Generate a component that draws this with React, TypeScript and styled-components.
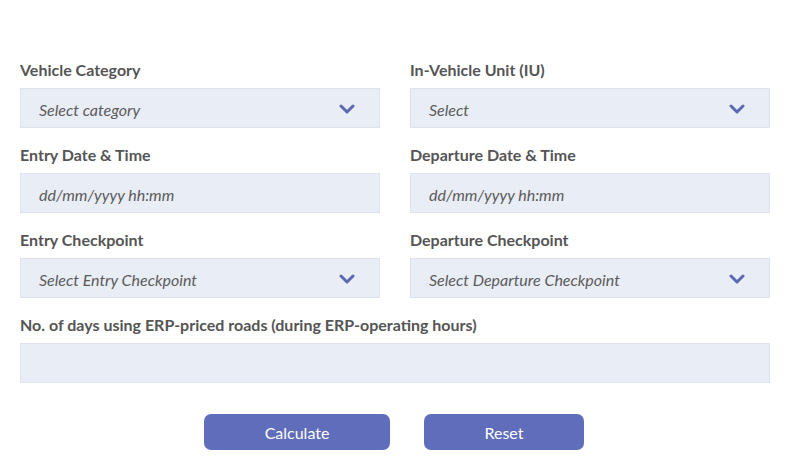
import React from 'react';
import styled, { createGlobalStyle } from 'styled-components';

const GlobalStyle = createGlobalStyle`
    html, body {
        margin: 0;
        padding: 0;
        background: #ffffff;
    }
    body {
        font-family: Lato, 'Open Sans', sans-serif;
    }
`;

const Form = styled.form`
    display: flex;
    flex-direction: column;
    padding: 60px 21px 0 20px;
`;

const Grid = styled.div`
    display: grid;
    grid-template-columns: 1fr 1fr;
    column-gap: 30px;
`;

const Field = styled.div<{ $wide?: boolean }>`
    display: flex;
    flex-direction: column;
    grid-column: ${(p) => (p.$wide ? '1 / -1' : 'auto')};
    margin-bottom: 17px;
`;

const Label = styled.label`
    font-size: 16px;
    font-weight: 700;
    line-height: 20px;
    color: #555555;
    margin-bottom: 8px;
`;

const Box = styled.div`
    display: flex;
    align-items: center;
    justify-content: space-between;
    height: 40px;
    box-sizing: border-box;
    padding: 2px 24px 0 18px;
    background: #e9edf6;
    border: 1px solid #dde2ec;
`;

const Placeholder = styled.span`
    font-size: 16px;
    font-style: italic;
    color: #5b5b5b;
`;

const Chevron = () => (
    <svg width="16" height="10" viewBox="0 0 16 10">
        <path
            d="M2 2 L8 8 L14 2"
            fill="none"
            stroke="#5c68b3"
            strokeWidth="3"
            strokeLinecap="round"
            strokeLinejoin="round"
        />
    </svg>
);

const Actions = styled.div`
    display: flex;
    justify-content: center;
    gap: 34px;
    margin-top: 14px;
    padding-right: 2px;
`;

const Button = styled.button<{ $width: number }>`
    width: ${(p) => p.$width}px;
    height: 36px;
    border: none;
    border-radius: 7px;
    background: #5f6dbb;
    color: #ffffff;
    font-family: Lato, 'Open Sans', sans-serif;
    font-size: 16px;
    cursor: pointer;
`;

type SelectProps = { label: string; placeholder: string };
const SelectField = ({ label, placeholder }: SelectProps) => (
    <Field>
        <Label>{label}</Label>
        <Box>
            <Placeholder>{placeholder}</Placeholder>
            <Chevron />
        </Box>
    </Field>
);

const App = () => (
    <>
        <GlobalStyle />
        <Form onSubmit={(e) => e.preventDefault()}>
            <Grid>
                <SelectField label="Vehicle Category" placeholder="Select category" />
                <SelectField label="In-Vehicle Unit (IU)" placeholder="Select" />
                <Field>
                    <Label>Entry Date &amp; Time</Label>
                    <Box>
                        <Placeholder>dd/mm/yyyy hh:mm</Placeholder>
                    </Box>
                </Field>
                <Field>
                    <Label>Departure Date &amp; Time</Label>
                    <Box>
                        <Placeholder>dd/mm/yyyy hh:mm</Placeholder>
                    </Box>
                </Field>
                <SelectField label="Entry Checkpoint" placeholder="Select Entry Checkpoint" />
                <SelectField
                    label="Departure Checkpoint"
                    placeholder="Select Departure Checkpoint"
                />
                <Field $wide>
                    <Label>No. of days using ERP-priced roads (during ERP-operating hours)</Label>
                    <Box />
                </Field>
            </Grid>
            <Actions>
                <Button type="submit" $width={186}>
                    Calculate
                </Button>
                <Button type="reset" $width={160}>
                    Reset
                </Button>
            </Actions>
        </Form>
    </>
);

export default App;
